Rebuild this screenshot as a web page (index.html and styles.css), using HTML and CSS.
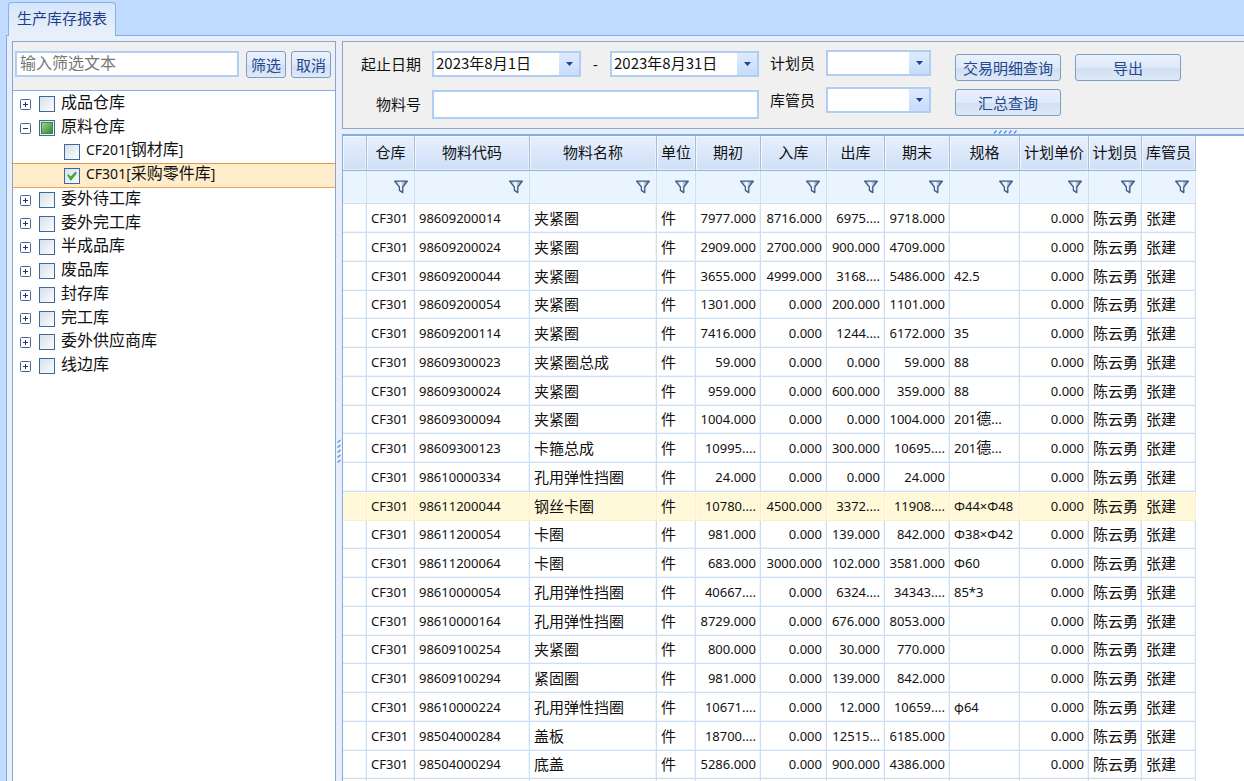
FILE: index.html
```html
<!DOCTYPE html>
<html lang="zh-CN">
<head>
<meta charset="utf-8">
<title>生产库存报表</title>
<link rel="stylesheet" href="styles.css">
</head>
<body>
<svg class="defs" width="0" height="0" aria-hidden="true">
  <defs>
    <linearGradient id="funnel-fill" x1="0" x2="1"><stop offset="0" stop-color="#7fa3d0"/><stop offset=".45" stop-color="#ffffff"/><stop offset="1" stop-color="#3d5f95"/></linearGradient>
    <symbol id="funnel" viewBox="0 0 14 14"><path d="M.6 1.200h12.800L8.800 7v5.600L5.400 10.400V7z" fill="url(#funnel-fill)" stroke="#3c5a88" stroke-width="1.300" stroke-linejoin="round"/></symbol>
    <symbol id="plus" viewBox="0 0 11 11"><rect x=".5" y=".5" width="10" height="10" rx="1" fill="#fff" stroke="#4a648f"/><path d="M3 5.500h5M5.500 3v5" stroke="#1f3864"/></symbol>
    <symbol id="minus" viewBox="0 0 11 11"><rect x=".5" y=".5" width="10" height="10" rx="1" fill="#fff" stroke="#4a648f"/><path d="M3 5.500h5" stroke="#1f3864"/></symbol>
    <symbol id="caret" viewBox="0 0 7 4"><path d="M0 0h7L3.500 4z" fill="#1d4589"/></symbol>
    <symbol id="grip" viewBox="0 0 24 4"><path d="M1 3.500L3.500.5M6 3.500L8.500.5M11 3.500L13.500.5M16 3.500L18.500.5M21 3.500L23.500.5" stroke="#5d92dc" stroke-width="1.300"/></symbol>
    <symbol id="vgrip" viewBox="0 0 4 24"><path d="M.5 3.500L3.500 1M.5 8.500L3.500 6M.5 13.500L3.500 11M.5 18.500L3.500 16M.5 23.500L3.500 21" stroke="#5d92dc" stroke-width="1.300"/></symbol>
  </defs>
</svg>
<div class="tabs" role="tablist"><button class="tab" role="tab" aria-selected="true">生产库存报表</button></div>
<main class="workspace">
  <aside class="side">
    <form class="filter">
      <input class="field filter-text" type="text" placeholder="输入筛选文本" aria-label="输入筛选文本">
      <button class="btn" type="button">筛选</button>
      <button class="btn" type="button">取消</button>
    </form>
    <ul class="tree">
      <li><div class="node"><button class="toggle" aria-label="展开"><svg><use href="#plus"/></svg></button><label><input type="checkbox">成品仓库</label></div></li>
      <li><div class="node"><button class="toggle" aria-label="收起"><svg><use href="#minus"/></svg></button><label><input type="checkbox" class="partial">原料仓库</label></div>
        <ul>
          <li><div class="node"><label><input type="checkbox"><span><span class="code">CF201[</span>钢材库<span class="code">]</span></span></label></div></li>
          <li><div class="node selected"><label><input type="checkbox" checked><span><span class="code">CF301[</span>采购零件库<span class="code">]</span></span></label></div></li>
        </ul>
      </li>
      <li><div class="node"><button class="toggle" aria-label="展开"><svg><use href="#plus"/></svg></button><label><input type="checkbox">委外待工库</label></div></li>
      <li><div class="node"><button class="toggle" aria-label="展开"><svg><use href="#plus"/></svg></button><label><input type="checkbox">委外完工库</label></div></li>
      <li><div class="node"><button class="toggle" aria-label="展开"><svg><use href="#plus"/></svg></button><label><input type="checkbox">半成品库</label></div></li>
      <li><div class="node"><button class="toggle" aria-label="展开"><svg><use href="#plus"/></svg></button><label><input type="checkbox">废品库</label></div></li>
      <li><div class="node"><button class="toggle" aria-label="展开"><svg><use href="#plus"/></svg></button><label><input type="checkbox">封存库</label></div></li>
      <li><div class="node"><button class="toggle" aria-label="展开"><svg><use href="#plus"/></svg></button><label><input type="checkbox">完工库</label></div></li>
      <li><div class="node"><button class="toggle" aria-label="展开"><svg><use href="#plus"/></svg></button><label><input type="checkbox">委外供应商库</label></div></li>
      <li><div class="node"><button class="toggle" aria-label="展开"><svg><use href="#plus"/></svg></button><label><input type="checkbox">线边库</label></div></li>
    </ul>
  </aside>
  <div class="vsplit"><svg width="4" height="24"><use href="#vgrip"/></svg></div>
  <section class="content">
    <form class="query">
      <div class="criteria">
        <label class="name" for="from">起止日期</label>
        <div class="range">
          <div class="combo field"><input id="from" type="text" value="2023年8月1日"><button type="button" class="drop" aria-label="选择开始日期"><svg><use href="#caret"/></svg></button></div>
          <span class="dash">-</span>
          <div class="combo field"><input type="text" value="2023年8月31日" aria-label="结束日期"><button type="button" class="drop" aria-label="选择结束日期"><svg><use href="#caret"/></svg></button></div>
        </div>
        <label class="name" for="material">物料号</label>
        <input class="field material" id="material" type="text">
      </div>
      <div class="people">
        <label for="planner">计划员</label>
        <div class="combo field"><select id="planner"><option></option><option>陈云勇</option></select><span class="drop"><svg><use href="#caret"/></svg></span></div>
        <label for="keeper">库管员</label>
        <div class="combo field"><select id="keeper"><option></option><option>张建</option></select><span class="drop"><svg><use href="#caret"/></svg></span></div>
      </div>
      <div class="actions">
        <button class="btn" type="button">交易明细查询</button>
        <button class="btn" type="button">导出</button>
        <button class="btn" type="button">汇总查询</button>
      </div>
    </form>
    <div class="hsplit"><svg width="24" height="4"><use href="#grip"/></svg></div>
    <div class="grid">
      <table>
        <colgroup><col class="c-mark"><col class="c-store"><col class="c-code"><col class="c-name"><col class="c-unit"><col class="c-open"><col class="c-in"><col class="c-out"><col class="c-open"><col class="c-spec"><col class="c-price"><col class="c-planner"><col class="c-keeper"></colgroup>
        <thead>
          <tr><th></th><th>仓库</th><th>物料代码</th><th>物料名称</th><th>单位</th><th>期初</th><th>入库</th><th>出库</th><th>期末</th><th>规格</th><th>计划单价</th><th>计划员</th><th>库管员</th></tr>
          <tr class="filters"><td></td><td><svg><use href="#funnel"/></svg></td><td><svg><use href="#funnel"/></svg></td><td><svg><use href="#funnel"/></svg></td><td><svg><use href="#funnel"/></svg></td><td><svg><use href="#funnel"/></svg></td><td><svg><use href="#funnel"/></svg></td><td><svg><use href="#funnel"/></svg></td><td><svg><use href="#funnel"/></svg></td><td><svg><use href="#funnel"/></svg></td><td><svg><use href="#funnel"/></svg></td><td><svg><use href="#funnel"/></svg></td><td><svg><use href="#funnel"/></svg></td></tr>
        </thead>
        <tbody>
          <tr><td></td><td>CF301</td><td>98609200014</td><td>夹紧圈</td><td>件</td><td>7977.000</td><td>8716.000</td><td>6975....</td><td>9718.000</td><td></td><td>0.000</td><td>陈云勇</td><td>张建</td></tr>
          <tr><td></td><td>CF301</td><td>98609200024</td><td>夹紧圈</td><td>件</td><td>2909.000</td><td>2700.000</td><td>900.000</td><td>4709.000</td><td></td><td>0.000</td><td>陈云勇</td><td>张建</td></tr>
          <tr><td></td><td>CF301</td><td>98609200044</td><td>夹紧圈</td><td>件</td><td>3655.000</td><td>4999.000</td><td>3168....</td><td>5486.000</td><td>42.5</td><td>0.000</td><td>陈云勇</td><td>张建</td></tr>
          <tr><td></td><td>CF301</td><td>98609200054</td><td>夹紧圈</td><td>件</td><td>1301.000</td><td>0.000</td><td>200.000</td><td>1101.000</td><td></td><td>0.000</td><td>陈云勇</td><td>张建</td></tr>
          <tr><td></td><td>CF301</td><td>98609200114</td><td>夹紧圈</td><td>件</td><td>7416.000</td><td>0.000</td><td>1244....</td><td>6172.000</td><td>35</td><td>0.000</td><td>陈云勇</td><td>张建</td></tr>
          <tr><td></td><td>CF301</td><td>98609300023</td><td>夹紧圈总成</td><td>件</td><td>59.000</td><td>0.000</td><td>0.000</td><td>59.000</td><td>88</td><td>0.000</td><td>陈云勇</td><td>张建</td></tr>
          <tr><td></td><td>CF301</td><td>98609300024</td><td>夹紧圈</td><td>件</td><td>959.000</td><td>0.000</td><td>600.000</td><td>359.000</td><td>88</td><td>0.000</td><td>陈云勇</td><td>张建</td></tr>
          <tr><td></td><td>CF301</td><td>98609300094</td><td>夹紧圈</td><td>件</td><td>1004.000</td><td>0.000</td><td>0.000</td><td>1004.000</td><td>201<span class="han">德</span>...</td><td>0.000</td><td>陈云勇</td><td>张建</td></tr>
          <tr><td></td><td>CF301</td><td>98609300123</td><td>卡箍总成</td><td>件</td><td>10995....</td><td>0.000</td><td>300.000</td><td>10695....</td><td>201<span class="han">德</span>...</td><td>0.000</td><td>陈云勇</td><td>张建</td></tr>
          <tr><td></td><td>CF301</td><td>98610000334</td><td>孔用弹性挡圈</td><td>件</td><td>24.000</td><td>0.000</td><td>0.000</td><td>24.000</td><td></td><td>0.000</td><td>陈云勇</td><td>张建</td></tr>
          <tr class="current"><td></td><td>CF301</td><td>98611200044</td><td>钢丝卡圈</td><td>件</td><td>10780....</td><td>4500.000</td><td>3372....</td><td>11908....</td><td>Φ44×Φ48</td><td>0.000</td><td>陈云勇</td><td>张建</td></tr>
          <tr><td></td><td>CF301</td><td>98611200054</td><td>卡圈</td><td>件</td><td>981.000</td><td>0.000</td><td>139.000</td><td>842.000</td><td>Φ38×Φ42</td><td>0.000</td><td>陈云勇</td><td>张建</td></tr>
          <tr><td></td><td>CF301</td><td>98611200064</td><td>卡圈</td><td>件</td><td>683.000</td><td>3000.000</td><td>102.000</td><td>3581.000</td><td>Φ60</td><td>0.000</td><td>陈云勇</td><td>张建</td></tr>
          <tr><td></td><td>CF301</td><td>98610000054</td><td>孔用弹性挡圈</td><td>件</td><td>40667....</td><td>0.000</td><td>6324....</td><td>34343....</td><td>85*3</td><td>0.000</td><td>陈云勇</td><td>张建</td></tr>
          <tr><td></td><td>CF301</td><td>98610000164</td><td>孔用弹性挡圈</td><td>件</td><td>8729.000</td><td>0.000</td><td>676.000</td><td>8053.000</td><td></td><td>0.000</td><td>陈云勇</td><td>张建</td></tr>
          <tr><td></td><td>CF301</td><td>98609100254</td><td>夹紧圈</td><td>件</td><td>800.000</td><td>0.000</td><td>30.000</td><td>770.000</td><td></td><td>0.000</td><td>陈云勇</td><td>张建</td></tr>
          <tr><td></td><td>CF301</td><td>98609100294</td><td>紧固圈</td><td>件</td><td>981.000</td><td>0.000</td><td>139.000</td><td>842.000</td><td></td><td>0.000</td><td>陈云勇</td><td>张建</td></tr>
          <tr><td></td><td>CF301</td><td>98610000224</td><td>孔用弹性挡圈</td><td>件</td><td>10671....</td><td>0.000</td><td>12.000</td><td>10659....</td><td><span class="phi">φ</span>64</td><td>0.000</td><td>陈云勇</td><td>张建</td></tr>
          <tr><td></td><td>CF301</td><td>98504000284</td><td>盖板</td><td>件</td><td>18700....</td><td>0.000</td><td>12515...</td><td>6185.000</td><td></td><td>0.000</td><td>陈云勇</td><td>张建</td></tr>
          <tr><td></td><td>CF301</td><td>98504000294</td><td>底盖</td><td>件</td><td>5286.000</td><td>0.000</td><td>900.000</td><td>4386.000</td><td></td><td>0.000</td><td>陈云勇</td><td>张建</td></tr>
          <tr><td></td><td></td><td></td><td></td><td></td><td></td><td></td><td></td><td></td><td></td><td></td><td></td><td></td></tr>
        </tbody>
      </table>
    </div>
  </section>
</main>
</body>
</html>
```
FILE: styles.css
```css
* { box-sizing: border-box; }
body {
  margin: 0;
  height: 100vh;
  overflow: hidden;
  display: flex;
  flex-direction: column;
  background: #bfdbff;
  color: #111;
  font: 15px/20px "Noto Sans", "Noto Sans CJK SC", sans-serif;
}
button, input, select { font: inherit; color: inherit; }
svg { display: block; }
.defs { position: absolute; }

/* Tab strip */
.tabs { padding: 2px 8px 0; height: 35px; flex: none; }
.tab {
  height: 34px;
  padding: 0 8px 3px;
  border: 1px solid #8cb0e3;
  border-bottom: 0;
  border-radius: 4px 4px 0 0;
  background: linear-gradient(#d6e6fb, #e9f0fa);
  color: #1e3f85;
  position: relative;
  z-index: 1;
}

/* Workspace */
.workspace {
  flex: 1;
  min-height: 0;
  display: flex;
  margin-left: 6px;
  padding: 5px 0 0 5px;
  border-top: 1px solid #84abe3;
  border-left: 1px solid #84abe3;
  background: #e8effa;
}
.side {
  width: 324px;
  flex: none;
  border: 1px solid #8ba6cc;
  border-bottom: 0;
  background: #fff;
}
.field { border: 2px solid #b0cdf3; background: #fff; border-radius: 0; outline: 0; }
.btn {
  border: 1px solid #7d9cc8;
  border-radius: 3px;
  background: linear-gradient(#e9f1fc, #dfe9f8 50%, #d1dff2 52%, #dde9f8);
  color: #24478f;
  padding: 0 3px;
  height: 27px;
  line-height: 24px;
  white-space: nowrap;
}
.filter {
  display: flex;
  gap: 5px;
  align-items: flex-start;
  padding: 9px 4px 12px 2px;
  background: #f0f0f0;
  border-bottom: 1px solid #86b0e4;
}
.filter-text { flex: 1; min-width: 0; height: 26px; margin-right: 2px; padding: 0 3px 3px; font-size: 16px; }
.filter-text::placeholder { color: #777; opacity: 1; }
.filter .btn { width: 40px; }

/* Warehouse tree */
.tree, .tree ul { list-style: none; margin: 0; padding: 0; }
.tree { font-size: 16px; }
.node { display: flex; align-items: center; height: 24px; padding: 2px 7px 0; gap: 8px; }
.tree > li:nth-child(4n) > .node { height: 23px; }
.tree ul .node { padding-left: 51px; }
.node.selected { background: #ffeccb; box-shadow: inset 0 1px #ee9440, 0 1px #f6a452; }
.node label { display: flex; align-items: center; gap: 6px; line-height: 20px; height: 20px; padding-bottom: 0; }
.code { font-size: 14px; }
.toggle { width: 11px; height: 11px; padding: 0; border: 0; background: none; }
.toggle svg { width: 11px; height: 11px; }
.node label { align-items: flex-end; line-height: 22px; height: 18px; }
.node input {
  appearance: none;
  width: 16px;
  height: 16px;
  margin: 0 0 1px;
  border: 1px solid #3b6a9d;
  background: linear-gradient(135deg, #d9dfe8, #fbfcfd);
  display: grid;
  place-items: center;
}
.node .partial::after { content: ""; width: 10px; height: 10px; background: linear-gradient(135deg, #9cd090, #35893a); border: 1px solid #3d8a48; }
.node input:checked::after {
  content: "";
  width: 10px;
  height: 10px;
  background: #43ab3c;
  clip-path: polygon(0 40%, 18% 32%, 36% 56%, 86% 4%, 100% 22%, 38% 100%);
}

.vsplit { width: 6px; flex: none; display: flex; align-items: center; justify-content: center; padding-top: 80px; }

/* Query form */
.content { flex: 1; min-width: 0; display: flex; flex-direction: column; }
.query {
  display: flex;
  align-items: flex-start;
  padding: 8px 18px 9px;
  height: 88px;
  flex: none;
  border: 1px solid #8ba6cc;
  border-right: 0;
  background: #f0f0f0;
}
.criteria { display: grid; grid-template-columns: 60px 327px; column-gap: 11px; row-gap: 13px; align-items: center; margin-top: 1px; }
.name { text-align: right; padding-bottom: 2px; }
.name:first-child { padding-bottom: 0; }
.range { display: flex; justify-content: space-between; align-items: center; }
.combo { display: flex; height: 26px; }
.combo input, .combo select { flex: 1; min-width: 0; width: 0; border: 0; padding: 0 2px 2px; background: #fff; outline: 0; appearance: none; }
.combo input { font-family: "Noto Sans CJK SC", sans-serif; }
.range .combo { width: 149px; }
.drop { width: 20px; padding: 0; border: 0; background: linear-gradient(#dfebfd, #c6dcfb); display: grid; place-items: center; pointer-events: none; }
.drop svg { width: 7px; height: 4px; }
.material { height: 29px; width: 100%; padding: 0 4px; }
.people { display: grid; grid-template-columns: 45px 105px; gap: 11px; align-items: center; margin-left: 11px; }
.actions { display: grid; grid-template-columns: 106px 106px; column-gap: 14px; row-gap: 8px; margin: 4px 0 0 24px; }

.hsplit { height: 5px; flex: none; display: flex; align-items: center; justify-content: center; padding-left: 424px; }

/* Stock table */
.grid { flex: 1; min-height: 0; overflow: hidden; background: #fff; border-top: 2px solid #83ace3; border-left: 1px solid #83ace3; }
table { table-layout: fixed; width: 853px; border-collapse: separate; border-spacing: 0; }
.c-mark { width: 24px; }
.c-store { width: 48px; }
.c-code { width: 115px; }
.c-name { width: 127px; }
.c-unit { width: 39px; }
.c-open { width: 65px; }
.c-in { width: 66px; }
.c-out { width: 58px; }
.c-spec { width: 70px; }
.c-price { width: 69px; }
.c-planner { width: 53px; }
.c-keeper { width: 54px; }
th {
  height: 35px;
  padding: 0 0 2px;
  font-weight: 400;
  white-space: nowrap;
  background: linear-gradient(#e7f0fd, #cfdff7);
  border-right: 1px solid #a7bdd9;
  border-bottom: 1px solid #9ab0cf;
  box-shadow: inset 1px 1px #f4f8fe, inset -1px -1px #e8f0fb;
}
td {
  height: 29px;
  padding: 0 4px 1px;
  border-right: 1px solid #cddff5;
  border-bottom: 1px solid #cddff5;
  box-shadow: inset -1px -1px #eef5fd;
  font-size: 13px;
  line-height: 20px;
  white-space: nowrap;
  overflow: hidden;
}
.filters td { height: 33px; background: #eaf4ff; }
.filters svg { width: 14px; height: 14px; margin: 0 2px 0 auto; }
tbody tr:nth-child(4n) td { height: 28px; }
tbody td:nth-child(n+6):nth-child(-n+9), tbody td:nth-child(11) { text-align: right; }
tbody td:nth-child(4), tbody td:nth-child(5), tbody td:nth-child(12), tbody td:nth-child(13), .han { font-size: 15px; }
tbody td:nth-child(12) { padding-right: 2px; }
.han { line-height: 18px; }
.phi { font-family: "Noto Sans CJK SC", sans-serif; line-height: 18px; }
.current td { background: #fff9d9; border-color: #fbeecb; box-shadow: inset 1px 1px #fffbe8; }
```
